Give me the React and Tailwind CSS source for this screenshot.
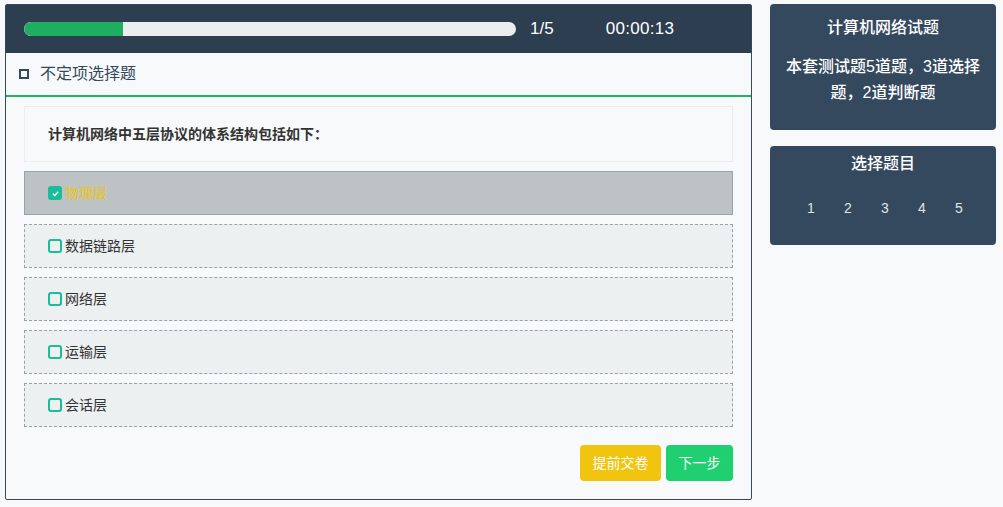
import React from "react";

const cjk = { fontFamily: '"Liberation Sans", "Noto Sans CJK SC", sans-serif' };

function Option({ label, selected }) {
  return (
    <div
      className={
        "h-[44px] flex items-center pl-[23px] " +
        (selected
          ? "bg-[#bdc3c5] border border-[#95a5a6]"
          : "bg-[#ecf0f1] border border-dashed border-[#95a5a6]")
      }
    >
      {selected ? (
        <span className="w-[14px] h-[14px] rounded-[3px] bg-[#1abc9c] flex items-center justify-center">
          <svg width="9" height="9" viewBox="0 0 10 10">
            <path d="M2 5.2 L4.2 7.2 L8 3" fill="none" stroke="#fff" strokeWidth="1.6" />
          </svg>
        </span>
      ) : (
        <span className="w-[14px] h-[14px] rounded-[3px] border-2 border-[#1abc9c] box-border" />
      )}
      <span className={"ml-[3px] text-[14px] " + (selected ? "text-[#f1c40f]" : "text-[#333]")}>{label}</span>
    </div>
  );
}

export default function App() {
  return (
    <div className="w-[1003px] h-[507px] bg-[#f7f9fa] flex pt-[4px] pl-[5px]" style={cjk}>
      <div className="w-[747px] h-[496px] border border-[#34495e] rounded-[2px] flex flex-col bg-[#f7f9fa]">
        <div className="h-[48px] bg-[#2c3e50] flex items-center pl-[18px] shrink-0">
          <div className="w-[492px] h-[14px] rounded-full bg-[#ecedef] overflow-hidden">
            <div className="h-full bg-[#1fae5f] rounded-l-full" style={{ width: "20.2%" }} />
          </div>
          <span className="ml-[14px] text-white text-[17px]">1/5</span>
          <span className="ml-[52px] text-white text-[17px] tracking-[0.3px]">00:00:13</span>
        </div>
        <div className="h-[44px] flex items-center pl-[13px] shrink-0 border-b-2 border-solid border-[#22b45e]">
          <span className="w-[10px] h-[10px] border-2 border-[#34495e] box-border" />
          <span className="ml-[11px] text-[16px] text-[#34495e]">不定项选择题</span>
        </div>
        <div className="px-[18px] pt-[9px] flex flex-col">
          <div className="h-[56px] border border-[#ecedee] bg-[#f7f9fa] flex items-center pl-[23px] text-[14px] font-bold text-[#333]">
            计算机网络中五层协议的体系结构包括如下：
          </div>
          <div className="mt-[9px] flex flex-col gap-[9px]">
            <Option label="物理层" selected />
            <Option label="数据链路层" />
            <Option label="网络层" />
            <Option label="运输层" />
            <Option label="会话层" />
          </div>
          <div className="mt-[18px] flex justify-end gap-[5px]">
            <button className="w-[81px] h-[36px] rounded-[4px] bg-[#f1c40f] text-white text-[14px]">提前交卷</button>
            <button className="w-[67px] h-[36px] rounded-[4px] bg-[#20cf6f] text-white text-[14px]">下一步</button>
          </div>
        </div>
      </div>
      <div className="ml-[18px] w-[226px] flex flex-col">
        <div className="h-[126px] rounded-[4px] bg-[#34495e] flex flex-col items-center pt-[13px] text-white">
          <div className="text-[16px] font-medium leading-[22px]">计算机网络试题</div>
          <div className="mt-[15px] text-[16px] font-medium leading-[26px] text-center px-[14px]">
            本套测试题5道题，3道选择题，2道判断题
          </div>
        </div>
        <div className="mt-[16px] h-[99px] rounded-[4px] bg-[#34495e] flex flex-col items-center pt-[7px] text-white">
          <div className="text-[16px] font-medium leading-[22px]">选择题目</div>
          <div className="mt-[23px] flex text-[14px] text-[#dfe4ea] pl-[4px]">
            {[1, 2, 3, 4, 5].map((n) => (
              <span key={n} className="w-[37px] text-center">{n}</span>
            ))}
          </div>
        </div>
      </div>
    </div>
  );
}
